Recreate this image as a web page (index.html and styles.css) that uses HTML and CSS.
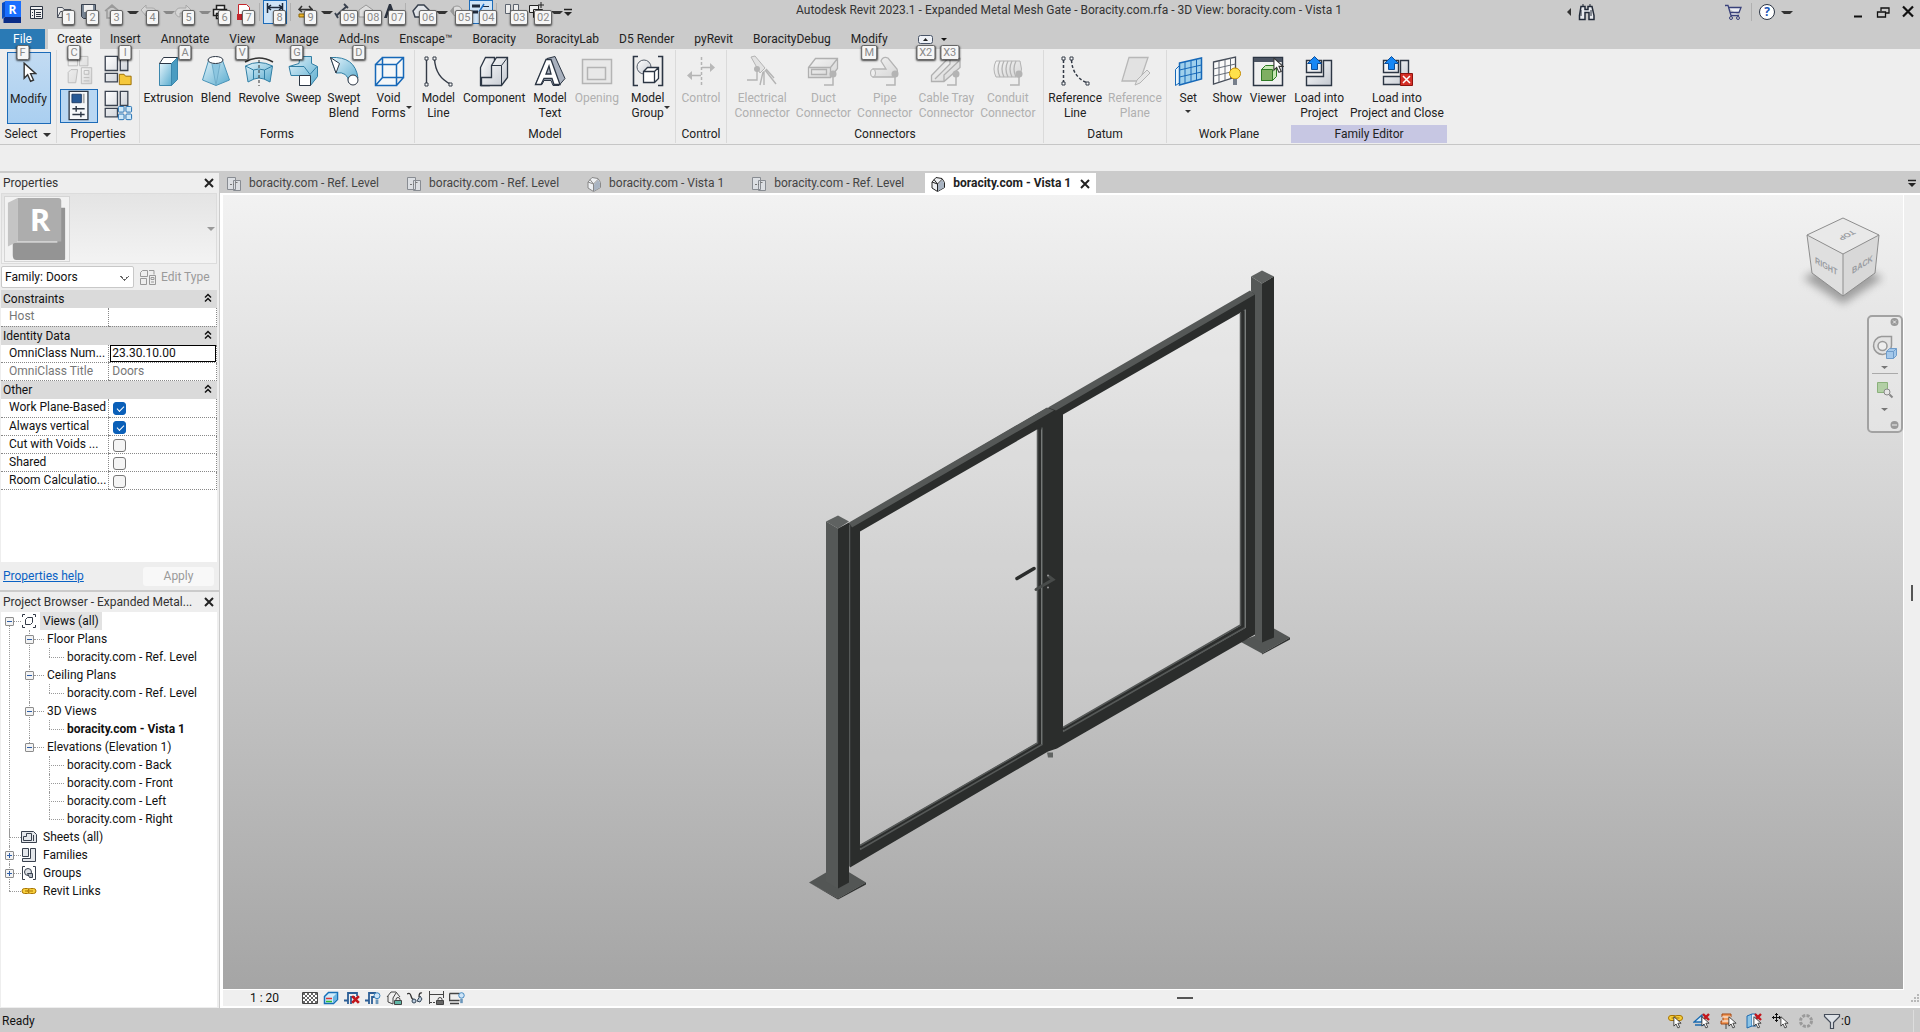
FILE: index.html
```html
<!DOCTYPE html>
<html lang="en">
<head>
<meta charset="utf-8">
<title>Autodesk Revit 2023.1 - Expanded Metal Mesh Gate</title>
<link rel="stylesheet" href="styles.css">
</head>
<body>
<svg class="defs" aria-hidden="true">
  <defs>
    <linearGradient id="gBlue" x1="0" y1="0" x2="1" y2="1"><stop offset="0" stop-color="#e4f4fb"/><stop offset="1" stop-color="#5aaccf"/></linearGradient>
    <linearGradient id="gGrey" x1="0" y1="0" x2="1" y2="1"><stop offset="0" stop-color="#ffffff"/><stop offset="1" stop-color="#c3c8d0"/></linearGradient>
    <linearGradient id="gDim" x1="0" y1="0" x2="1" y2="1"><stop offset="0" stop-color="#f4f4f4"/><stop offset="1" stop-color="#d6d6d6"/></linearGradient>
    <symbol id="cursor" viewBox="0 0 12 18"><path d="M1 1v13l3-3 2.500 5.500 2.500-1-2.500-5.500h4.500z" fill="#fff" stroke="#333" stroke-width="1.200"/></symbol>
    <symbol id="plan" viewBox="0 0 16 16"><path d="M1.500 1.500h8v12h-8zM7.500 4.500h7v10h-7z" fill="#dcdfe3" stroke="#888c92"/><path d="M4 8.500h4M9.500 6.500h3" stroke="#777" stroke-dasharray="2 1"/></symbol>
    <symbol id="house" viewBox="0 0 16 16"><path d="M2 6l4-4.500 6 1 2.500 4v5l-7 4L2 12z" fill="#eef0f3" stroke="currentColor"/><path d="M7.500 15V8l5-5M7.500 8L4 3.500M2 6l5.500 2" fill="none" stroke="currentColor"/><path d="M8 8.500l4-4.500 2 2.500v5l-6 3.500z" fill="#a9b4c2"/></symbol>
    <symbol id="close" viewBox="0 0 12 12"><path d="M2 2l8 8M10 2l-8 8" stroke="#222" stroke-width="2" fill="none"/></symbol>
    <symbol id="redx" viewBox="0 0 8 8"><path d="M1 1l6 6M7 1L1 7" stroke="#c3161c" stroke-width="2.400"/></symbol>
    <symbol id="chain" viewBox="0 0 16 8"><rect x="1" y="1.500" width="8" height="5" rx="2.500" fill="#f7cf3c" stroke="#a87400"/><rect x="7" y="1.500" width="8" height="5" rx="2.500" fill="#f7cf3c" stroke="#a87400"/><path d="M4 4h8" stroke="#a87400"/></symbol>
    <symbol id="bulb" viewBox="0 0 8 14"><circle cx="4" cy="4" r="3.200" fill="#cfe5f8" stroke="#2f7bb8"/><path d="M2.500 8h3v5h-3z" fill="#6a96ba"/></symbol>
    <symbol id="lock" viewBox="0 0 8 8"><path d="M2 4V2.500a2 2 0 014 0V4" fill="none" stroke="#444"/><path d="M.5 3.500h7v4h-7z" fill="currentColor" stroke="#444"/></symbol>
  </defs>
</svg>

<div class="app">
  <header class="titlebar">
    <div class="qat">
      <button class="qbtn" aria-label="Revit menu"><svg viewBox="0 0 24 24"><path d="M2 3l4-2v15l-4 3z" fill="#0a4ec2"/><path d="M5 1h16v16H5z" fill="#1a6fff"/><path d="M5 17h16v6H3.500v-5z" fill="#0a2c87"/><text x="12.500" y="14" class="rglyph" text-anchor="middle">R</text></svg></button>
      <button class="qbtn" aria-label="Home"><svg viewBox="0 0 24 24"><path d="M6.500 6.500h12v12h-12zM6.500 9.500h12M10.500 10v8M12 12.500h5M12 14.500h5M12 16.500h5M8 12.500h1M8 15.500h1" fill="#f2f2f2" stroke="#2c3442"/></svg></button>
      <span class="qgap"></span>
      <button class="qbtn" aria-label="Open"><svg viewBox="0 0 24 24"><path d="M5.500 17.500v-10h5l1.500 2h7v3M5.500 17.500l3-6h10l-3 6z" fill="#eee" stroke="#4a505c"/></svg><kbd>1</kbd></button>
      <button class="qbtn" aria-label="Save"><svg viewBox="0 0 24 24"><path d="M5.500 4.500h14v14h-12l-2-2z" fill="#788594" stroke="#39414e"/><path d="M8 5h9v7H8z" fill="#eee"/></svg><kbd>2</kbd></button>
      <button class="qbtn" aria-label="Sync"><svg viewBox="0 0 24 24"><path d="M5 11l7-6 7 6M7 10v8h10v-8M8 9a5 5 0 018 0" fill="none" stroke="#9a9a9a" stroke-width="1.500"/></svg><kbd>3</kbd></button>
      <span class="qdrop on"></span>
      <button class="qbtn" aria-label="Undo"><svg viewBox="0 0 24 24"><path d="M5 10l5-5v3h6a4 4 0 010 9v-4h-6v3z" fill="#d6d6d6" stroke="#a8a8a8"/></svg><kbd>4</kbd></button>
      <span class="qdrop"></span>
      <button class="qbtn" aria-label="Redo"><svg viewBox="0 0 24 24"><path d="M19 10l-5-5v3H8a4 4 0 000 9v-4h6v3z" fill="#d6d6d6" stroke="#a8a8a8"/></svg><kbd>5</kbd></button>
      <span class="qdrop"></span>
      <button class="qbtn" aria-label="Print"><svg viewBox="0 0 24 24"><path d="M8.500 9V5.500h8V9M5.500 9.500h13v6h-13zM8.500 13.500h8v5h-8z" fill="#f5f5f5" stroke="#222" stroke-width="1.500"/></svg><kbd>6</kbd></button>
      <button class="qbtn" aria-label="Export PDF"><svg viewBox="0 0 24 24"><path d="M6.500 4.500h8l3 3v12h-11z" fill="#fff" stroke="#c4252b"/><path d="M5 14h7v6H5z" fill="#c4252b"/></svg><kbd>7</kbd></button>
      <span class="qsep"></span>
      <button class="qbtn active" aria-label="Measure"><svg viewBox="0 0 24 24"><path d="M4.500 3v10M19.500 3v10M5 7.500h14M8 5L5 7.500 8 10M16 5l3 2.500-3 2.500" fill="none" stroke="#1e2a3c" stroke-width="1.500"/></svg><kbd>8</kbd></button>
      <span class="qsep"></span>
      <button class="qbtn" aria-label="Dimension"><svg viewBox="0 0 24 24"><path d="M5 9.500h14M8 6L5 9.500 8 12M15 6l3 3.500-3 3" fill="none" stroke="#333" stroke-width="1.500"/><path d="M5 14h7v3H5z" fill="#eeb52d" stroke="#8b6500"/></svg><kbd>9</kbd></button>
      <span class="qdrop on"></span>
      <button class="qbtn" aria-label="Tag"><svg viewBox="0 0 24 24"><path d="M6 16L17 6M5 13l3 5M14 4l4 4" stroke="#39414e" stroke-width="1.800"/></svg><kbd>09</kbd></button>
      <button class="qbtn" aria-label="Model detail"><svg viewBox="0 0 24 24"><path d="M5 10l7-5 7 5v7H5z" fill="#dedede" stroke="#999"/></svg><kbd>08</kbd></button>
      <button class="qbtn" aria-label="Text"><svg viewBox="0 0 24 24"><path d="M6 18l5-14h2l5 14h-3l-1-4h-4l-1 4z" fill="#2c3340"/></svg><kbd>07</kbd></button>
      <span class="qsep"></span>
      <button class="qbtn" aria-label="Default 3D view"><svg viewBox="0 0 24 24"><path d="M4 11l5-6h6l5 5v7H6z" fill="#e3e6ea" stroke="#39414e" stroke-width="1.500"/></svg><kbd>06</kbd></button>
      <span class="qdrop on"></span>
      <button class="qbtn" aria-label="Section"><svg viewBox="0 0 24 24"><circle cx="12" cy="11" r="5" fill="#ddd" stroke="#999"/><path d="M5 11l4-5v10z" fill="#999"/></svg><kbd>05</kbd></button>
      <button class="qbtn active" aria-label="Thin lines"><svg viewBox="0 0 24 24"><path d="M3 6h8M3 12h6" stroke="#1e2a3c" stroke-width="3"/><path d="M13 6.500h7M12 12.500h8" stroke="#1e2a3c"/><path d="M10 12l5-8" stroke="#1a6ec7" stroke-width="1.500"/></svg><kbd>04</kbd></button>
      <span class="qsep"></span>
      <button class="qbtn" aria-label="Close inactive views"><svg viewBox="0 0 24 24"><path d="M5.500 4.500h5v9h-5zM13.500 4.500h5v9h-5z" fill="#eee" stroke="#5d646f"/></svg><kbd>03</kbd></button>
      <button class="qbtn" aria-label="Switch windows"><svg viewBox="0 0 24 24"><path d="M5.500 5.500h9v7h-9zM9.500 9.500h9v8h-9z" fill="#eee" stroke="#222"/><path d="M17 2v6M14 5h6" stroke="#222"/></svg><kbd>02</kbd></button>
      <span class="qdrop on"></span>
      <button class="qend" aria-label="Customize"><svg viewBox="0 0 16 24"><path d="M4 9.500h8" stroke="#222" stroke-width="1.500"/><path d="M4 12h8l-4 4z" fill="#222"/></svg></button>
    </div>
    <h1>Autodesk Revit 2023.1 - Expanded Metal Mesh Gate - Boracity.com.rfa - 3D View: boracity.com - Vista 1</h1>
    <div class="tools">
      <button aria-label="Collapse search"><svg class="w8" viewBox="0 0 8 24"><path d="M5 8v8l-4-4z" fill="#333"/></svg></button>
      <button aria-label="Search"><svg class="w18" viewBox="0 0 18 24"><path d="M3 6.500h4v3h3v-3h4l2 9v4h-5v-7H7v7H1.500v-4z" fill="#e9ebef" stroke="#222a38" stroke-width="1.500"/><path d="M3 10v6M13 10v6M4 5h2M11 5h2" stroke="#222a38"/></svg></button>
      <span class="grow"></span>
      <button aria-label="App store"><svg class="w18" viewBox="0 0 18 24"><path d="M1 5.500h3l3 10h8M4 7.500h13l-2 5H6" fill="#eceef5" stroke="#39417a" stroke-width="1.300"/><circle cx="7" cy="18" r="1.500" fill="none" stroke="#39417a"/><circle cx="14" cy="18" r="1.500" fill="none" stroke="#39417a"/></svg></button>
      <span class="qsep"></span>
      <button aria-label="Help"><svg class="w18" viewBox="0 0 18 24"><circle cx="9" cy="12" r="7.500" fill="#fff" stroke="#2b3444"/><text x="9" y="16" text-anchor="middle" class="qmark">?</text></svg></button>
      <span class="qdrop on"></span>
      <span class="winbtns">
        <button aria-label="Minimize"><svg class="w14" viewBox="0 0 14 24"><path d="M3 16.500h8" stroke="#111" stroke-width="2"/></svg></button>
        <button aria-label="Restore"><svg class="w14" viewBox="0 0 14 24"><path d="M5 11V8h8v5h-3M1.500 12h8v5h-8z" fill="none" stroke="#111" stroke-width="1.300"/></svg></button>
        <button aria-label="Close"><svg class="w14" viewBox="0 0 14 24"><path d="M2 6.500l10 10M12 6.500l-10 10" stroke="#111" stroke-width="2.200"/></svg></button>
      </span>
    </div>
  </header>

  <nav class="tabs">
    <button class="tab file">File<kbd>F</kbd></button>
    <button class="tab current">Create<kbd>C</kbd></button>
    <button class="tab">Insert<kbd>I</kbd></button>
    <button class="tab">Annotate<kbd>A</kbd></button>
    <button class="tab">View<kbd>V</kbd></button>
    <button class="tab">Manage<kbd>G</kbd></button>
    <button class="tab">Add-Ins<kbd>D</kbd></button>
    <button class="tab">Enscape™</button>
    <button class="tab">Boracity</button>
    <button class="tab">BoracityLab</button>
    <button class="tab">D5 Render</button>
    <button class="tab">pyRevit</button>
    <button class="tab">BoracityDebug</button>
    <button class="tab">Modify<kbd>M</kbd></button>
    <button class="mini" aria-label="Minimize ribbon"><svg viewBox="0 0 18 12"><rect x="1.500" y="2.500" width="14" height="8" rx="2" fill="#eef1f6" stroke="#4a5568"/><path d="M6 8l2.500-3L11 8z" fill="#222"/></svg><kbd>X2</kbd></button>
    <button class="mini" aria-label="Ribbon options"><svg viewBox="0 0 18 12"><path d="M0 5h6l-3 3z" fill="#111"/></svg><kbd>X3</kbd></button>
  </nav>

  <section class="ribbon">
    <div class="panel p-select">
      <div class="items">
        <button class="modify"><svg class="i32" viewBox="0 0 32 32"><use href="#cursor" x="10" y="6" width="14" height="21"/></svg>Modify</button>
      </div>
      <div class="plabel">Select <i class="caret"></i></div>
    </div>
    <div class="panel p-props">
      <div class="grid">
        <button aria-label="Family category"><svg viewBox="0 0 34 34"><g fill="url(#gDim)" stroke="#bbb"><path d="M5.500 4.500l3-3h7v10h-10zM17.500 1.500h9v10h-9zM5.500 18.500l3-3h7l-2 14h-8z"/><path d="M19.500 13.500h11v17h-11z"/><path d="M22.500 16.500h5v4h-5zM22 24h6M22 27.500h6"/></g></svg></button>
        <button aria-label="Family types"><svg viewBox="0 0 34 34"><g fill="url(#gGrey)" stroke="#3b4350" stroke-width="1.400"><path d="M4.500 1.500h13v15h-13zM20.500 1.500h8v15h-8zM4.500 19.500h13v9h-13z"/></g><path d="M19.500 20.500h5l1.500 2h6v9H19.500z" fill="#f5c83c" stroke="#9a6d00"/></svg></button>
        <button class="active" aria-label="Properties"><svg viewBox="0 0 34 34"><path d="M6.500 1.500h20v30h-20z" fill="#f6f8fa" stroke="#2c3644" stroke-width="1.400"/><path d="M9.500 4.500h10v9h-10z" fill="#285a96" stroke="#1d3c66"/><path d="M22 4v10" stroke="#aaa" stroke-width="2"/><path d="M10 20h13M10 26h13M14 17v6M19 23v6" stroke="#2c3644" stroke-width="1.500"/></svg></button>
        <button aria-label="Type properties"><svg viewBox="0 0 34 34"><g fill="url(#gGrey)" stroke="#3b4350" stroke-width="1.400"><path d="M4.500 1.500h13v15h-13zM20.500 1.500h8v15h-8zM4.500 19.500h13v9h-13z"/></g><g fill="#cfe8f8" stroke="#1c6bb0"><rect x="18.500" y="17.500" width="6" height="6" rx="1"/><rect x="26.500" y="17.500" width="6" height="6" rx="1"/><rect x="18.500" y="25.500" width="6" height="6" rx="1"/><rect x="26.500" y="25.500" width="6" height="6" rx="1"/></g></svg></button>
      </div>
      <div class="plabel">Properties</div>
    </div>
    <div class="panel p-forms">
      <div class="items">
        <button class="rb"><svg class="i32" viewBox="0 0 32 32"><path d="M7.500 8.500h12v22h-12z" fill="url(#gBlue)" stroke="#3b87ad"/><path d="M7.500 8.500l4-6h14l-6 6z" fill="#fff" stroke="#2c3644"/><path d="M19.500 8.500l6-6v22l-6 6z" fill="#4b9cc1" stroke="#3b87ad"/></svg>Extrusion</button>
        <button class="rb"><svg class="i32" viewBox="0 0 32 32"><path d="M9 4L2.500 25 16 30.500 29.500 25 22 4z" fill="url(#gBlue)" stroke="#4a94b8"/><path d="M12 9l4 21 4-21" fill="#8cc6e0" stroke="#70adca"/><ellipse cx="15.500" cy="5" rx="7.500" ry="3.500" fill="#fff" stroke="#2c3644"/></svg>Blend</button>
        <button class="rb"><svg class="i32" viewBox="0 0 32 32"><path d="M2 7Q16-1 30 7" fill="none" stroke="#333" stroke-width="1.500"/><path d="M2.500 11Q16 4 29.500 11L27 27l-6-3q-5-2-10 0l-6 3z" fill="url(#gBlue)" stroke="#317fa5"/><path d="M2.500 11l8 4q5-2 11 0l8-4M10.500 15v9M21.500 15v9" fill="none" stroke="#317fa5"/><path d="M16 5v26" stroke="#333" stroke-dasharray="3 2"/></svg>Revolve</button>
        <button class="rb"><svg class="i32" viewBox="0 0 32 32"><path d="M12.500 4.500l4-3h8v7l6 3v10l-7 9h-11v-10H4l-2-9 10-3z" fill="url(#gBlue)" stroke="#317fa5"/><path d="M2 11.500h15l6 8 7-8" fill="none" stroke="#317fa5"/><path d="M12.500 20.500h11v10h-11z" fill="#fff" stroke="#2c3644"/></svg>Sweep</button>
        <button class="rb"><svg class="i32" viewBox="0 0 32 32"><path d="M2.500 2.500Q27 1 30 23l-9 5Q20 16 8 18z" fill="url(#gBlue)" stroke="#317fa5"/><path d="M2.500 2.500l9 6L8 18z" fill="#fff" stroke="#2c3644"/><circle cx="25" cy="25" r="5" fill="#fff" stroke="#2c3644"/></svg>Swept<br>Blend</button>
        <button class="rb drop"><svg class="i32" viewBox="0 0 32 32"><path d="M2.500 9.500h21v21h-21zM9.500 2.500h21v20h-21zM2.500 9.500l7-7M23.500 9.500l7-7M23.500 30.500l7-8M2.500 30.500l7-8" fill="#fafdff" fill-opacity=".6" stroke="#1668b8" stroke-width="1.500"/></svg>Void<br>Forms</button>
      </div>
      <div class="plabel">Forms</div>
    </div>
    <div class="panel p-model">
      <div class="items">
        <button class="rb"><svg class="i32" viewBox="0 0 32 32"><path d="M4.500 4v25M12.500 4q1 18 16 25" fill="none" stroke="#333a46" stroke-width="1.400"/><path d="M3 2h3v3H3zM3 28h3v3H3zM11 2h3v3h-3zM27 28h3v3h-3z" fill="#fff" stroke="#333a46"/></svg>Model<br>Line</button>
        <button class="rb"><svg class="i32" viewBox="0 0 32 32"><path d="M2.500 12.500l5-10h9v21l-5 7h-9z" fill="url(#gGrey)" stroke="#2c3644" stroke-width="1.300"/><path d="M13.500 10.500l5-8h11v20l-6 8h-20v-8h10z" fill="url(#gGrey)" stroke="#2c3644" stroke-width="1.300"/><path d="M23.500 30V10.500l6-8M13.500 10.500h10" stroke="#2c3644" fill="none"/></svg>Component</button>
        <button class="rb"><svg class="i32" viewBox="0 0 32 32"><path d="M1.500 29.500L13 3.500l8-2 10 22-6 7h-6l-2-5h-7l-2 4z" fill="#a9b1be" stroke="#2c3644"/><path d="M1.500 29.500L12 4.500h5l9 25h-6l-2-6h-8l-3 6zM12 19h5l-2-8z" fill="#fff" stroke="#2c3644" stroke-width="1.300" fill-rule="evenodd"/></svg>Model<br>Text</button>
        <button class="rb" disabled><svg class="i32" viewBox="0 0 32 32"><path d="M1.500 4.500h29v24h-29zM6.500 12.500h18v12h-18z" fill="#e8e8e8" stroke="#b4b4b4" stroke-width="1.500"/></svg>Opening</button>
        <button class="rb drop"><svg class="i32" viewBox="0 0 32 32"><path d="M6 1.500H1.500v29H6M26 1.500h4.500v29H26" fill="none" stroke="#2c3644" stroke-width="1.600"/><circle cx="12" cy="12" r="7" fill="url(#gGrey)" stroke="#555d69"/><path d="M11.500 16.500l4-4h11v11l-4 4h-11zM11.500 16.500h11v11M22.500 16.500l4-4" fill="#fff" stroke="#2c3644" stroke-width="1.300"/></svg>Model<br>Group</button>
      </div>
      <div class="plabel">Model</div>
    </div>
    <div class="panel p-control">
      <div class="items">
        <button class="rb" disabled><svg class="i32" viewBox="0 0 32 32"><path d="M16.500 2v29" stroke="#b4b4b4" stroke-width="1.500" stroke-dasharray="3 2"/><path d="M17 12.500h10M4 20.500h12" stroke="#b4b4b4" stroke-width="1.500"/><path d="M25 8l5 4.500-5 4.500zM7 16l-5 4.500L7 25z" fill="#b8b8b8"/></svg>Control</button>
      </div>
      <div class="plabel">Control</div>
    </div>
    <div class="panel p-conn">
      <div class="items">
        <button class="rb" disabled><svg class="i32" viewBox="0 0 32 32"><path d="M5 2l4-1 10 12-5 5z" fill="#e2e2e2" stroke="#b4b4b4"/><path d="M17 17l-3 13M18 16v14M19 15l11 14M20 14l8 9M11 13v12H1" fill="none" stroke="#b4b4b4" stroke-width="1.400"/><circle cx="11" cy="14" r="3" fill="#b4b4b4"/></svg>Electrical<br>Connector</button>
        <button class="rb" disabled><svg class="i32" viewBox="0 0 32 32"><path d="M1.500 12.500l7-9h22v10l-7 9h-22zM1.500 12.500h22v10M23.500 12.500l7-9M4.500 14.500h15v5h-15z" fill="url(#gDim)" stroke="#b0b0b0" stroke-width="1.300"/><circle cx="26" cy="19" r="3.500" fill="#b4b4b4"/><path d="M26 22v8h-9" fill="none" stroke="#b4b4b4" stroke-width="1.500"/></svg>Duct<br>Connector</button>
        <button class="rb" disabled><svg class="i32" viewBox="0 0 32 32"><path d="M12 6q2-5 7-3l9 11q2 8-4 8H4q-4-4 0-8h13z" fill="url(#gDim)" stroke="#b4b4b4" stroke-width="1.300"/><ellipse cx="4" cy="18" rx="2.500" ry="4" fill="#eee" stroke="#b4b4b4"/><circle cx="26" cy="19" r="3.500" fill="#b4b4b4"/><path d="M26 22v8h-9" fill="none" stroke="#b4b4b4" stroke-width="1.500"/></svg>Pipe<br>Connector</button>
        <button class="rb" disabled><svg class="i32" viewBox="0 0 32 32"><path d="M1.500 20.500L18 3.500h12v9L14 26.500H1.500zM5 24L20 9v-5M14 26V20L30 5" fill="url(#gDim)" stroke="#b0b0b0" stroke-width="1.300"/><circle cx="26" cy="19" r="3.500" fill="#b4b4b4"/><path d="M26 22v8h-9" fill="none" stroke="#b4b4b4" stroke-width="1.500"/></svg>Cable Tray<br>Connector</button>
        <button class="rb" disabled><svg class="i32" viewBox="0 0 32 32"><path d="M4 6h24q3 8 0 16H4q-4-8 0-16z" fill="url(#gDim)" stroke="#b4b4b4"/><path d="M8 6q-4 8 0 16M12 6q-4 8 0 16M16 6q-4 8 0 16M20 6q-4 8 0 16M24 6q-4 8 0 16" fill="none" stroke="#b4b4b4" stroke-width="1.300"/><circle cx="27" cy="19" r="3.500" fill="#b4b4b4"/><path d="M27 22v8h-9" fill="none" stroke="#b4b4b4" stroke-width="1.500"/></svg>Conduit<br>Connector</button>
      </div>
      <div class="plabel">Connectors</div>
    </div>
    <div class="panel p-datum">
      <div class="items">
        <button class="rb"><svg class="i32" viewBox="0 0 32 32"><path d="M4.500 5v23M12.500 5q1 17 16 23" fill="none" stroke="#333a46" stroke-width="1.500" stroke-dasharray="3 2"/><path d="M3 2h3v3H3zM3 27h3v3H3zM11 2h3v3h-3zM27 27h3v3h-3z" fill="#fff" stroke="#333a46"/></svg>Reference<br>Line</button>
        <button class="rb" disabled><svg class="i32" viewBox="0 0 32 32"><path d="M10 2.500h19L21 26H3z" fill="#e2e2e2" stroke="#b8b8b8" stroke-width="1.300"/><path d="M16 30l2-5 10-10 3 3-10 10z" fill="#e6e6e6" stroke="#b4b4b4"/></svg>Reference<br>Plane</button>
      </div>
      <div class="plabel">Datum</div>
    </div>
    <div class="panel p-work">
      <div class="items">
        <button class="rb"><svg class="i32" viewBox="0 0 32 32"><path d="M3.500 14.500l6-6v18l-6 4z" fill="#e9f5fc" stroke="#1668b8"/><path d="M7.500 8l22-5v21l-22 6z" fill="#9fd0ec" stroke="#1668b8" stroke-width="1.500"/><path d="M13 7v21M19 5.500v21M24.500 4v21M7.500 15l22-5M7.500 22l22-5" stroke="#1668b8"/></svg>Set<i class="caret"></i></button>
        <button class="rb"><svg class="i32" viewBox="0 0 32 32"><path d="M2.500 7l22-5v20l-22 7z" fill="#fafafa" stroke="#444b57" stroke-width="1.300"/><path d="M8 6v21M14 4.500v21M19.500 3v20M2.500 14l22-5M2.500 21l22-5" stroke="#666d78"/><circle cx="24" cy="18.500" r="5.500" fill="#ffe14b" stroke="#c48a00"/><path d="M22 24h4v6h-4z" fill="#777f8b"/></svg>Show</button>
        <button class="rb"><svg class="i32" viewBox="0 0 32 32"><path d="M1.500 2.500h29v28h-29z" fill="#f0f0f0" stroke="#2c3644" stroke-width="1.500"/><path d="M2 3h28v4H2z" fill="#4b5462"/><path d="M9.500 14.500l4-4h11v11l-4 4h-11z" fill="#c7e6b4" stroke="#2e7a24"/><path d="M9.500 14.500h11v11h-11z" fill="#7fae62" stroke="#2e7a24"/><use href="#cursor" x="21" y="2" width="11" height="17"/></svg>Viewer</button>
      </div>
      <div class="plabel">Work Plane</div>
    </div>
    <div class="panel p-family">
      <div class="items">
        <button class="rb"><svg class="i32" viewBox="0 0 32 32"><path d="M3.500 5.500h15v12h-15zM20.500 5.500h8v25h-25v-9h17z" fill="url(#gGrey)" stroke="#2c3644" stroke-width="1.400"/><path d="M11.500 1.500l7 7h-4v6h-6v-6h-4z" fill="#1687f5" stroke="#0b4e9b"/></svg>Load into<br>Project</button>
        <button class="rb"><svg class="i32" viewBox="0 0 32 32"><path d="M2.500 5.500h15v12h-15zM19.500 5.500h8v15h-8zM2.500 21.500h17v8h-17z" fill="url(#gGrey)" stroke="#2c3644" stroke-width="1.400"/><path d="M10.500 1.500l7 7h-4v6h-6v-6h-4z" fill="#1687f5" stroke="#0b4e9b"/><path d="M19.500 18.500h12v12h-12z" fill="#d42f27" stroke="#8e120d"/><path d="M22 21l7 7M29 21l-7 7" stroke="#fff" stroke-width="1.500"/></svg>Load into<br>Project and Close</button>
      </div>
      <div class="plabel">Family Editor</div>
    </div>
  </section>
  <div class="optionsbar"></div>

  <main class="work">
    <aside class="side">
      <section class="props">
        <header class="phead"><h2>Properties</h2><button aria-label="Close properties"><svg viewBox="0 0 12 12"><use href="#close"/></svg></button></header>
        <div class="typebox">
          <svg class="thumb" viewBox="0 0 66 66"><path d="M8 47h46V11h8v53q0 1-1 1H12q-4 0-4-5z" fill="#949494"/><path d="M3 6l10-5v45L3 51z" fill="#c4c4c4"/><path d="M13 1h42q3 0 3 3v42H13z" fill="#adadad"/><text x="36" y="35" text-anchor="middle" class="bigr">R</text></svg>
          <i class="caret"></i>
        </div>
        <div class="family">
          <select aria-label="Family"><option>Family: Doors</option></select>
          <button class="edit" disabled><svg viewBox="0 0 16 16"><path d="M.5 3.500l2-2h5v6h-7zM9 1.500h5v4M.5 15.500v-6h6v6z" fill="#eee" stroke="#999"/><path d="M9.500 6.500h6v9h-6zM11 8.500h3v2h-3zM11 13h3" fill="#eee" stroke="#999"/></svg>Edit Type</button>
        </div>
        <div class="gridwrap">
        <table>
          <tbody>
          <tr class="sec"><th colspan="2" scope="colgroup">Constraints <svg viewBox="0 0 8 10"><path d="M1 4.500l3-3 3 3M1 8.500l3-3 3 3"/></svg></th></tr>
          <tr class="off"><th scope="row">Host</th><td></td></tr>
          <tr class="sec"><th colspan="2" scope="colgroup">Identity Data <svg viewBox="0 0 8 10"><path d="M1 4.500l3-3 3 3M1 8.500l3-3 3 3"/></svg></th></tr>
          <tr><th scope="row"><label for="omni">OmniClass Num...</label></th><td><input id="omni" type="text" value="23.30.10.00"></td></tr>
          <tr class="off"><th scope="row">OmniClass Title</th><td>Doors</td></tr>
          <tr class="sec"><th colspan="2" scope="colgroup">Other <svg viewBox="0 0 8 10"><path d="M1 4.500l3-3 3 3M1 8.500l3-3 3 3"/></svg></th></tr>
          <tr><th scope="row"><label for="c1">Work Plane-Based</label></th><td><input id="c1" type="checkbox" checked></td></tr>
          <tr><th scope="row"><label for="c2">Always vertical</label></th><td><input id="c2" type="checkbox" checked></td></tr>
          <tr><th scope="row"><label for="c3">Cut with Voids ...</label></th><td><input id="c3" type="checkbox"></td></tr>
          <tr><th scope="row"><label for="c4">Shared</label></th><td><input id="c4" type="checkbox"></td></tr>
          <tr><th scope="row"><label for="c5">Room Calculatio...</label></th><td><input id="c5" type="checkbox"></td></tr>
          </tbody>
        </table>
        </div>
        <footer class="pfoot"><a href="#help">Properties help</a><button disabled>Apply</button></footer>
      </section>
      <section class="browser">
        <header class="phead"><h2>Project Browser - Expanded Metal...</h2><button aria-label="Close project browser"><svg viewBox="0 0 12 12"><use href="#close"/></svg></button></header>
        <ul class="tree">
          <li><div class="row"><i class="exp"></i><i class="dots"></i><svg viewBox="0 0 16 16"><path d="M4 1.500H1.500V4M12 1.500h2.500V4M4 14.500H1.500V12M12 14.500h2.500V12" fill="none" stroke="#333b48"/><path d="M4.500 6.500l2-2h5v5l-2 2h-5z" fill="#fff" stroke="#333b48"/></svg><span class="sel">Views (all)</span></div>
            <ul>
              <li><div class="row"><i class="exp"></i><i class="dots"></i><span>Floor Plans</span></div><ul><li><div class="row"><i class="dots"></i><span>boracity.com - Ref. Level</span></div></li></ul></li>
              <li><div class="row"><i class="exp"></i><i class="dots"></i><span>Ceiling Plans</span></div><ul><li><div class="row"><i class="dots"></i><span>boracity.com - Ref. Level</span></div></li></ul></li>
              <li><div class="row"><i class="exp"></i><i class="dots"></i><span>3D Views</span></div><ul><li><div class="row"><i class="dots"></i><span><b>boracity.com - Vista 1</b></span></div></li></ul></li>
              <li><div class="row"><i class="exp"></i><i class="dots"></i><span>Elevations (Elevation 1)</span></div>
                <ul>
                  <li><div class="row"><i class="dots"></i><span>boracity.com - Back</span></div></li>
                  <li><div class="row"><i class="dots"></i><span>boracity.com - Front</span></div></li>
                  <li><div class="row"><i class="dots"></i><span>boracity.com - Left</span></div></li>
                  <li><div class="row"><i class="dots"></i><span>boracity.com - Right</span></div></li>
                </ul></li>
            </ul></li>
          <li><div class="row leaf"><i class="dots"></i><svg viewBox="0 0 16 16"><path d="M.5 2.500h12l3 3v8H.5z" fill="#e4e7eb" stroke="#39414e"/><path d="M2.500 11.500v-4h3v-3h5v7zM12.500 6v6" fill="none" stroke="#39414e"/></svg><span>Sheets (all)</span></div></li>
          <li><div class="row"><i class="exp plus"></i><i class="dots"></i><svg viewBox="0 0 16 16"><path d="M1.500 1.500h6v8h-6zM9.500 1.500h5v13h-13v-3h8z" fill="#e4e7eb" stroke="#39414e"/></svg><span>Families</span></div></li>
          <li><div class="row"><i class="exp plus"></i><i class="dots"></i><svg viewBox="0 0 16 16"><path d="M4 1.500H1.500v13H4M12 1.500h2.500v13H12" fill="none" stroke="#39414e"/><circle cx="7" cy="7" r="3.500" fill="#dde1e6" stroke="#39414e"/><path d="M6.500 8.500h5v4h-3z" fill="#b4bbc5" stroke="#39414e"/></svg><span>Groups</span></div></li>
          <li><div class="row leaf"><i class="dots"></i><svg viewBox="0 0 16 8"><use href="#chain"/></svg><span>Revit Links</span></div></li>
        </ul>
      </section>
    </aside>

    <section class="docs">
      <div class="doctabs">
        <button><svg viewBox="0 0 16 16"><use href="#plan"/></svg>boracity.com - Ref. Level</button>
        <button><svg viewBox="0 0 16 16"><use href="#plan"/></svg>boracity.com - Ref. Level</button>
        <button><svg class="pale" viewBox="0 0 16 16"><use href="#house"/></svg>boracity.com - Vista 1</button>
        <button><svg viewBox="0 0 16 16"><use href="#plan"/></svg>boracity.com - Ref. Level</button>
        <div class="open"><button><svg viewBox="0 0 16 16"><use href="#house"/></svg>boracity.com - Vista 1</button><button aria-label="Close view"><svg viewBox="0 0 12 12"><use href="#close"/></svg></button></div>
        <span class="grow"></span>
        <button class="more" aria-label="All tabs"><svg viewBox="0 0 16 16"><path d="M4 5.500h8" stroke="#222" stroke-width="1.500"/><path d="M4 8h8l-4 4z" fill="#222"/></svg></button>
      </div>
      <div class="viewrow">
        <div class="canvas">
          <svg class="scene" viewBox="223 195 1680 793" role="img" aria-label="3D view of a double mesh gate">
            <g fill="#fff" fill-opacity=".1"><path d="M1063 414l178-102v313l-178 102zM860 531l177-102v313l-177 103z"/></g>
            <g fill="#535655">
              <path d="M809 882l29-17 28 17-28 16z"/>
              <path d="M1240 641l34-13 16 9-28 16z"/>
            </g>
            <path d="M809 882l29 16 28-16v2l-28 15zM1262 653l28-16v2l-28 15z" fill="#303231"/>
            <path d="M849 523L1046 408l4-1L1255 290V634L1057 748l-9 3L850 867zM860 531V849l182-105V429l-5 0zM1063 414V731l183-104V309z" fill="#2b2d2c" fill-rule="evenodd"/>
            <path d="M849 522l198-115 7 3-202 117zM1048 407l202-117 5 4-199 116z" fill="#555857"/>
            <path d="M860 847l179-103.500V428M1063 729l180-103V310" fill="none" stroke="#2b2d2c" stroke-width="4"/>
            <path d="M860 845l177.500-102.500V429M860 849l182-105V427M1063 727l177.500-102.500V312M1063 731l182-104V309M849.500 524v342" fill="none" stroke="#565958" stroke-width="1.500"/>
            <path d="M826 521l12-6 11 6-11 7z" fill="#5f6261"/>
            <path d="M826 521l12 7v360l-12-7z" fill="#555857"/><path d="M838 528l11-6v360l-11 6z" fill="#2b2d2c"/>
            <path d="M1251 276l11-6 12 6-12 7z" fill="#5f6261"/>
            <path d="M1251 276l11 7v359l-7-4V294l-4-3z" fill="#555857"/><path d="M1262 283l12-7v361l-12 5z" fill="#2b2d2c"/>
            <path d="M1017 578l17-10" stroke="#2b2d2c" stroke-width="3.500" stroke-linecap="round"/>
            <path d="M1036 589l17-10-4-3" fill="none" stroke="#484b4a" stroke-width="3" stroke-linecap="round"/>
            <circle cx="1048" cy="587" r="1" fill="#999"/><circle cx="1048" cy="575" r="1" fill="#999"/>
            <path d="M1047 752h6v5h-5z" fill="#616463"/>
          </svg>
          <svg class="cube" viewBox="0 0 90 98">
            <defs><filter id="soft" x="-30%" y="-30%" width="160%" height="160%"><feGaussianBlur stdDeviation="4"/></filter></defs>
            <path d="M5 64l40 26 40-26-40-20z" fill="#777" opacity=".65" filter="url(#soft)"/>
            <path d="M45 4l36 17-36 19L9 21z" fill="#e9e9e9"/><path d="M9 21l36 19v42L14 59z" fill="#dfdfdf"/><path d="M81 21L45 40v42l32-23z" fill="#d8d8d8"/>
            <path d="M45 4l36 17-36 19L9 21zM9 21l5 38 31 23 32-23 4-38M45 40v42" fill="none" stroke="#8d8d8d"/>
            <text class="face" transform="matrix(.8 .45 0 1 17 49)">RIGHT</text>
            <text class="face" transform="matrix(.8 -.5 0 1 54 60)">BACK</text>
            <text class="face" transform="matrix(-.8 .4 -.7 -.5 54 16)">TOP</text>
          </svg>
          <div class="navbar">
            <svg viewBox="0 0 36 118">
              <g fill="#999"><circle cx="27.500" cy="7" r="4"/><circle cx="27.500" cy="110" r="4"/></g><path d="M26 5.500l3 3M29 5.500l-3 3M25 110h5" stroke="#eee"/>
              <path d="M14.500 21.500h10v9a9 9 0 11-10-9z" fill="#e3e3e3" stroke="#999" stroke-width="1.500"/><circle cx="15.500" cy="31" r="4.500" fill="#eee" stroke="#999" stroke-width="1.500"/>
              <path d="M19.500 36.500l3-3h7v7l-3 3h-7zM19.500 36.500h7v7M26.500 36.500l3-3" fill="#a4c8ea" stroke="#6f9cca"/>
              <path d="M14 51h7l-3.500 3zM14 93h7l-3.500 3z" fill="#777"/><path d="M5 58.500h26" stroke="#aaa"/>
              <path d="M10.500 67.500h10v10h-10z" fill="#b2cfa5" stroke="#8ab17b"/><circle cx="20" cy="77" r="3" fill="#e6e6e6" stroke="#888"/><path d="M22.500 79.500l3 3" stroke="#888" stroke-width="2"/>
            </svg>
          </div>
        </div>
        <div class="vscroll"><i></i></div>
      </div>
      <div class="viewbar">
        <button class="scale">1 : 20</button>
        <button aria-label="Detail level"><svg viewBox="0 0 16 16"><path d="M.5 2.500h15v11H.5z" fill="#fff" stroke="#444"/><path d="M1 4h14M1 8h14M1 12h14" stroke="#666" stroke-width="2" stroke-dasharray="2 2"/><path d="M3 6h12M3 10h12" stroke="#666" stroke-width="2" stroke-dasharray="2 2"/></svg></button>
        <button aria-label="Visual style"><svg viewBox="0 0 16 16"><path d="M1.500 6.500l4-4h9v7l-4 4h-9z" fill="#cdeafa" stroke="#1670b8" stroke-width="1.500"/><path d="M10 7v6l4-4V3z" fill="#69b5e2"/><path d="M3 8.500h6" stroke="#d33" stroke-width="1.500"/><path d="M3 11.500h6" stroke="#3b3" stroke-width="1.500"/></svg></button>
        <button aria-label="Sun path"><svg viewBox="0 0 16 16"><path d="M0 10.500h4M4 14V3h9v3M7 14V7h4" fill="none" stroke="#2c5e96" stroke-width="1.800"/><use href="#redx" x="7" y="5" width="9" height="9"/></svg></button>
        <button aria-label="Crop view"><svg viewBox="0 0 16 16"><path d="M0 10.500h4M4 14V3h7M7 14V7h3" fill="none" stroke="#2c5e96" stroke-width="1.800"/><use href="#bulb" x="8" y="2" width="8" height="13"/></svg></button>
        <button aria-label="Lock 3D view"><svg viewBox="0 0 16 16"><path d="M1 7l4-5h5l4 5M2 6v6l5 2V8l3-5" fill="#eee" stroke="#444"/><use class="teal" href="#lock" x="8" y="7" width="8" height="8"/></svg></button>
        <button aria-label="Temporary hide"><svg viewBox="0 0 16 16"><path d="M0 4q3-2 4 2t4 4M15 3q-3-1-3 4" fill="none" stroke="#333" stroke-width="1.300"/><circle cx="7" cy="11" r="2" fill="#bcd" stroke="#345"/><path d="M10 11l3-5 2 3-2 3z" fill="#bcd" stroke="#345"/></svg></button>
        <button aria-label="Reveal constraints"><svg viewBox="0 0 16 16"><path d="M1.500 1v13M15.500 1v7M1 4.500h15" stroke="#444"/><path d="M2 12.500h6" stroke="#444" stroke-dasharray="2 1"/><use class="dark" href="#lock" x="8" y="7" width="8" height="8"/></svg></button>
        <button aria-label="Worksharing"><svg viewBox="0 0 16 16"><path d="M.5 3.500h10M.5 3.500v7h10M1 13.500h9" fill="none" stroke="#444" stroke-width="1.500"/><use href="#bulb" x="9" y="2" width="7" height="12"/></svg></button>
        <span class="grow"></span><i class="hthumb"></i><span class="grow"></span>
        <svg class="grip" viewBox="0 0 10 10"><path d="M7 1h2v2H7zM4 4h2v2H4zM7 4h2v2H7zM1 7h2v2H1zM4 7h2v2H4zM7 7h2v2H7z" fill="#b8b8b8"/></svg>
      </div>
    </section>
  </main>

  <footer class="status">
    <span>Ready</span><span class="grow"></span>
    <button aria-label="Select links"><svg viewBox="0 0 18 18"><use href="#chain" x="0" y="2" width="17" height="8"/><use href="#cursor" x="6" y="4" width="9" height="13"/></svg></button>
    <button aria-label="Select underlay"><svg viewBox="0 0 18 18"><path d="M1 10l8-7v7zM2 13h9" fill="#cfe8f8" stroke="#1c6bb0" stroke-width="1.300"/><use href="#redx" x="9" y="1" width="8" height="8"/><use href="#cursor" x="8" y="4" width="9" height="13"/></svg></button>
    <button aria-label="Select pinned"><svg viewBox="0 0 18 18"><path d="M3 2h9v3h-1v4h2v3H2V9h2V5H3z" fill="#f29a5a" stroke="#a54710"/><path d="M3 5h9M3 9h9" stroke="#fff"/><path d="M7 12v5" stroke="#444"/><use href="#cursor" x="9" y="4" width="9" height="13"/></svg></button>
    <button aria-label="Select by face"><svg viewBox="0 0 18 18"><path d="M2 4l5-2v12l-5 2z" fill="#8cc4e6" stroke="#1c6bb0"/><path d="M7 2h4v12H7" fill="#e8f4fb" stroke="#1c6bb0"/><use href="#redx" x="9" y="1" width="8" height="8"/><use href="#cursor" x="8" y="4" width="9" height="13"/></svg></button>
    <button aria-label="Drag on selection"><svg viewBox="0 0 18 18"><path d="M5.500 1v9M1 5.500h9M4 2.500h3M4 8.500h3M2.500 4v3M8.500 4v3" stroke="#111"/><use href="#cursor" x="9" y="4" width="9" height="13"/></svg></button>
    <button aria-label="Background processes"><svg viewBox="0 0 18 18"><circle cx="9" cy="9" r="5.500" fill="none" stroke="#9a9a9a" stroke-width="3" stroke-dasharray="3 1.300"/></svg></button>
    <button class="filter"><svg viewBox="0 0 18 18"><path d="M1.500 2.500h15v2l-6 6v6h-3v-6l-6-6z" fill="#dde1e6" stroke="#454d5a" stroke-width="1.200"/></svg>:0</button>
    <span class="endsep"></span>
  </footer>
</div>
</body>
</html>
```
FILE: styles.css
```css
* { box-sizing: border-box; }
html, body { height: 100%; margin: 0; }
body { font: 12px/15px Roboto, "Open Sans", sans-serif; color: #222; background: #cbcbcb; overflow: hidden; }
button { font: inherit; color: inherit; border: 0; padding: 0; margin: 0; background: none; }
h1, h2 { font: inherit; margin: 0; }
svg { display: block; }
.defs { position: absolute; width: 0; height: 0; }
.app { display: flex; flex-direction: column; height: 100%; }
.grow { flex: 1; }
.caret { display: inline-block; border: 4px solid transparent; border-top-color: #333; border-bottom: 0; }

/* keyboard hints */
kbd {
  position: absolute; z-index: 3; height: 15px; min-width: 13px; padding: 0 2px;
  font: 11px/13px Roboto, sans-serif; color: #8a8a8a; text-align: center;
  background: #f6f6f6; border: 1px solid #666; border-radius: 2px; box-shadow: 0 1px 2px rgba(0,0,0,.7);
}

/* title bar */
.titlebar { display: flex; height: 29px; color: #333; }
.titlebar h1 { flex: 1; text-align: center; line-height: 20px; white-space: nowrap; }
.qat { display: flex; height: 24px; }
.qbtn { position: relative; width: 24px; height: 24px; }
.qbtn.active { background: #cfe4f7; border: 1px solid #1c6bb8; }
.qbtn.active svg { margin: -1px; }
.qbtn svg { width: 24px; height: 24px; }
.qbtn kbd { left: 10px; top: 10px; }
.qbtn.active kbd { left: 9px; top: 9px; }
.qgap { width: 4px; }
.qsep { width: 7px; margin: 3px 0; background: linear-gradient(#b0b0b0, #b0b0b0) 3px 0 / 1px 100% no-repeat; }
.qdrop { width: 12px; padding: 11px 0 0 3px; }
.qdrop::before { content: ""; display: block; width: 6px; height: 3px; border: 3px solid transparent; border-top-color: #888; border-bottom: 0; }
.qdrop.on::before { border-top-color: #333; }
.qend svg { width: 16px; height: 24px; }
.rglyph { font: bold 12px "Open Sans"; fill: #fff; }
.qmark { font: bold 12px "Open Sans"; fill: #1a55b8; }
.tools { display: flex; width: 358px; height: 24px; }
.tools button { display: flex; align-items: center; }
.tools .w8 { width: 16px; height: 24px; }
.tools .w18 { width: 18px; height: 24px; }
.tools .w14 { width: 14px; height: 24px; }
.tools > .grow { flex: 0 1 128px; }
.tools > .qsep { margin-left: 6px; }
.tools > .qsep + button { margin-left: 3px; }
.tools > .qdrop { margin-left: 2px; }
.winbtns { display: flex; gap: 11px; margin-left: auto; padding-right: 5px; }

/* ribbon tabs */
.tabs { display: flex; height: 20px; }
.tab { position: relative; padding: 1px 10px 0; white-space: nowrap; }
.tab kbd, .mini kbd { left: 50%; top: 16px; transform: translateX(-50%); }
.tab.file { width: 45px; background: #2a7ab5; color: #fff; margin-right: 3px; }
.tab.current { background: #eee; padding: 1px 8px 0 9px; }
.mini { position: relative; width: 24px; display: flex; justify-content: center; align-items: center; }
.tab + .mini { margin-left: 16px; }
.mini svg { width: 18px; height: 12px; }

/* ribbon */
.ribbon { display: flex; height: 96px; background: #eee; border-bottom: 1px solid #c6c6c6; }
.panel { display: flex; flex-direction: column; flex: none; margin: 1px 0; border-right: 1px solid #dadada; }
.items { display: flex; justify-content: center; flex: 1; padding-top: 5px; }
.plabel { height: 18px; line-height: 18px; text-align: center; white-space: nowrap; }
.p-select { width: 57px; }
.p-props { width: 83px; }
.p-forms { width: 275px; }
.p-model { width: 261px; }
.p-control { width: 51px; }
.p-conn { width: 317px; }
.p-datum { width: 123px; }
.p-work { width: 124px; border: 0; }
.p-family { width: 156px; border: 0; }
.p-family .plabel { background: #c7c7e3; }
.p-select .plabel .caret { margin-left: 3px; vertical-align: 1px; }
.p-select .items { padding: 2px 0 0 1px; }
.i32 { width: 32px; height: 32px; margin: 0 auto 4px; }
.modify { width: 44px; height: 72px; padding-bottom: 14px; background: linear-gradient(#c2dbf2, #aacff0); border: 1px solid #1c6bb8; }
.rb { position: relative; display: flex; flex-direction: column; align-items: center; padding: 0 3px; min-width: 39px; line-height: 15px; text-align: center; white-space: nowrap; }
.rb:disabled { color: #b0b0b0; }
.rb.drop { padding: 0 8px; }
.rb.drop::after { content: ""; position: absolute; right: 2px; top: 51px; border: 3px solid transparent; border-top-color: #333; border-bottom: 0; }
.p-model .rb { padding: 0 4px; }
.p-model .rb.drop { padding: 0 8px; }
.rb .caret { border-width: 3px 3px 0; margin-top: 4px; }
.grid { flex: 1; display: grid; grid-template: 34px 34px / 38px 38px; gap: 1px 0; padding: 4px 0 0 3px; }
.grid button { display: flex; justify-content: center; align-items: center; }
.grid svg { width: 34px; height: 32px; }
.grid .active { background: #b9d7f3; border: 1px solid #1c6bb8; }
.optionsbar { height: 26px; background: #eee; }

/* work area */
.work { flex: 1; display: flex; min-height: 0; }
.side { width: 219px; display: flex; flex-direction: column; padding-top: 2px; gap: 2px; }
.props { background: #eee; display: flex; flex-direction: column; height: 417px; padding: 0 2px 0 1px; }
.browser { background: #eee; flex: 1; display: flex; flex-direction: column; padding: 0 2px 1px 1px; min-height: 0; }
.phead { display: flex; align-items: center; justify-content: space-between; height: 20px; padding: 0 1px 0 2px; color: #333; }
.phead svg { width: 12px; height: 12px; }
.phead h2 { line-height: 22px; white-space: nowrap; }
.phead button { padding-right: 1px; }
.typebox { display: flex; align-items: center; justify-content: space-between; height: 71px; border: 1px solid #dcdcdc; background: linear-gradient(#e4e4e4, #f3f3f3); padding: 2px 1px 2px 2px; }
.typebox .thumb { width: 66px; height: 66px; border: 1px solid #d5d5d5; background: #f2f2f2; }
.typebox .caret { border-top-color: #999; }
.bigr { font: bold 32px "Open Sans"; fill: #fff; }
.family { display: flex; align-items: center; height: 26px; }
select { appearance: none; width: 133px; height: 22px; font: inherit; color: #111; padding: 0 3px; border: 1px solid #c8c8c8; border-radius: 2px; background: #fff; background-image: linear-gradient(45deg, transparent 45%, #666 45% 60%, transparent 60%), linear-gradient(-45deg, transparent 45%, #666 45% 60%, transparent 60%); background-size: 5px 5px; background-position: right 8px top 9px, right 4px top 9px; background-repeat: no-repeat; }
.edit { display: flex; align-items: center; gap: 5px; margin-left: 6px; color: #9a9a9a; }
.edit svg { width: 16px; height: 16px; }
.gridwrap { flex: 1; background: #fff; }
table { width: 100%; border-collapse: collapse; table-layout: fixed; color: #111; }
tr { height: 18px; }
th, td { font-weight: normal; text-align: left; vertical-align: top; padding: 0 0 0 8px; height: 18px; line-height: 16px; border-bottom: 1px dotted #888; white-space: nowrap; }
th { width: 109px; }
td { padding: 0 1px 0 3px; border-left: 1px dotted #888; border-right: 1px dotted #888; }
.off th, .off td { color: #777; }
.sec th { background: #dadada; border: 0; padding: 0 5px 0 2px; line-height: 18px; }
.sec svg { float: right; width: 8px; height: 10px; margin-top: 3px; fill: none; stroke: #111; stroke-width: 1.5px; }
td input[type=text] { display: block; width: 106px; height: 17px; margin-left: -2px; padding: 0 1px; font: inherit; color: #111; border: 1px solid #000; background: #fff; }
td input[type=checkbox] { appearance: none; display: block; width: 13px; height: 13px; margin: 3px 0 0 1px; border: 1px solid #777; border-radius: 3px; background: #f5f5f5; }
td input[type=checkbox]:checked { border-color: #0a5fb8; background: #0a5fb8; }
td input[type=checkbox]:checked::before { content: ""; display: block; width: 6px; height: 3px; margin: 3px 0 0 3px; border: solid #fff; border-width: 0 0 1px 1px; transform: rotate(-45deg); }
.pfoot { display: flex; justify-content: space-between; align-items: center; height: 28px; padding: 0 3px 0 2px; }
.pfoot a { color: #0a62c4; }
.pfoot button { width: 71px; height: 19px; color: #9a9a9a; background: #f8f8f8; border-radius: 3px; }

/* project browser tree */
.tree { flex: 1; background: #fff; overflow: hidden; color: #111; }
.tree, .tree ul { list-style: none; margin: 0; padding: 0; }
.tree ul { margin-left: 20px; }
.tree li { position: relative; }
.tree li::before { content: ""; position: absolute; left: 8px; top: 0; height: 100%; border-left: 1px dotted #999; }
.tree li:last-child::before { height: 9px; }
.tree > li:first-child::before { top: 9px; }
.row { display: flex; align-items: center; height: 18px; padding-left: 4px; white-space: nowrap; }
.row span { padding: 0 3px; line-height: 18px; }
.row .sel { background: #e2e2e2; }
.row svg { width: 16px; height: 16px; margin-right: 3px; }
.exp { position: relative; width: 9px; height: 9px; border: 1px solid #8c8c8c; border-radius: 1px; background: linear-gradient(#2f5fa8, #2f5fa8) center / 5px 1px no-repeat #f3f3f3; }
.exp.plus { background: linear-gradient(#2f5fa8, #2f5fa8) center / 5px 1px no-repeat, linear-gradient(#2f5fa8, #2f5fa8) center / 1px 5px no-repeat, #f3f3f3; }
.dots { width: 7px; border-top: 1px dotted #999; }
.leaf .dots { width: 12px; margin-left: 4px; }
.tree ul .dots { width: 10px; }
.tree ul ul .dots { width: 15px; margin-left: 4px; }

/* documents */
.docs { flex: 1; min-width: 0; display: flex; flex-direction: column; padding-left: 1px; }
.doctabs { display: flex; height: 22px; color: #444; }
.doctabs button { display: flex; align-items: center; gap: 7px; padding: 3px 21px 0 6px; white-space: nowrap; }
.doctabs svg { width: 16px; height: 16px; }
.doctabs .pale { color: #888; }
.open { display: flex; margin-top: 2px; background: #fff; font-weight: bold; color: #222; }
.doctabs .open button { padding: 1px 0 0 5px; }
.doctabs .open button + button { padding: 1px 5px 0 8px; }
.open button + button svg { width: 12px; height: 12px; }
.doctabs .more { padding: 2px 0 0; }
.viewrow { flex: 1; min-height: 0; display: flex; background: #efefef; border-top: 2px solid #fff; border-left: 3px solid #fff; }
.canvas { position: relative; flex: 1; min-width: 0; background: linear-gradient(#f2f2f2, #a5a5a5); border-right: 1px solid #fff; border-bottom: 1px solid #fff; }
.scene { width: 100%; height: 100%; }
.cube { position: absolute; right: 15px; top: 19px; width: 90px; height: 98px; }
.face { font: bold 9px "Liberation Sans"; fill: #999ca1; }
.navbar { position: absolute; right: 0; top: 120px; width: 36px; height: 118px; border: 2px solid #a2a2a2; border-radius: 5px; background: rgba(235,235,235,.5); }
.navbar svg { width: 36px; height: 118px; margin: -2px; }
.vscroll { width: 16px; display: flex; align-items: center; justify-content: center; }
.vscroll i { width: 2px; height: 16px; background: #555; }
.viewbar { display: flex; align-items: center; height: 18px; background: #efefef; border-bottom: 2px solid #fff; border-left: 3px solid #fff; }
.viewbar button { width: 21px; }
.viewbar svg { width: 16px; height: 16px; }
.viewbar .scale { width: 79px; padding-left: 27px; text-align: left; color: #111; }
.hthumb { width: 16px; height: 2px; background: #555; margin-right: 10px; }
.viewbar .grip { width: 10px; height: 10px; }
.teal { color: #5fb5a5; }
.dark { color: #666; }

/* status bar */
.status { display: flex; align-items: center; height: 24px; padding: 2px 0 0 2px; color: #111; background: #cbcbcb; }
.status button { display: flex; align-items: center; width: 26px; }
.status svg { width: 18px; height: 18px; }
.status .filter { width: 90px; }
.endsep { width: 7px; height: 22px; border-left: 1px solid #ddd; }
```
